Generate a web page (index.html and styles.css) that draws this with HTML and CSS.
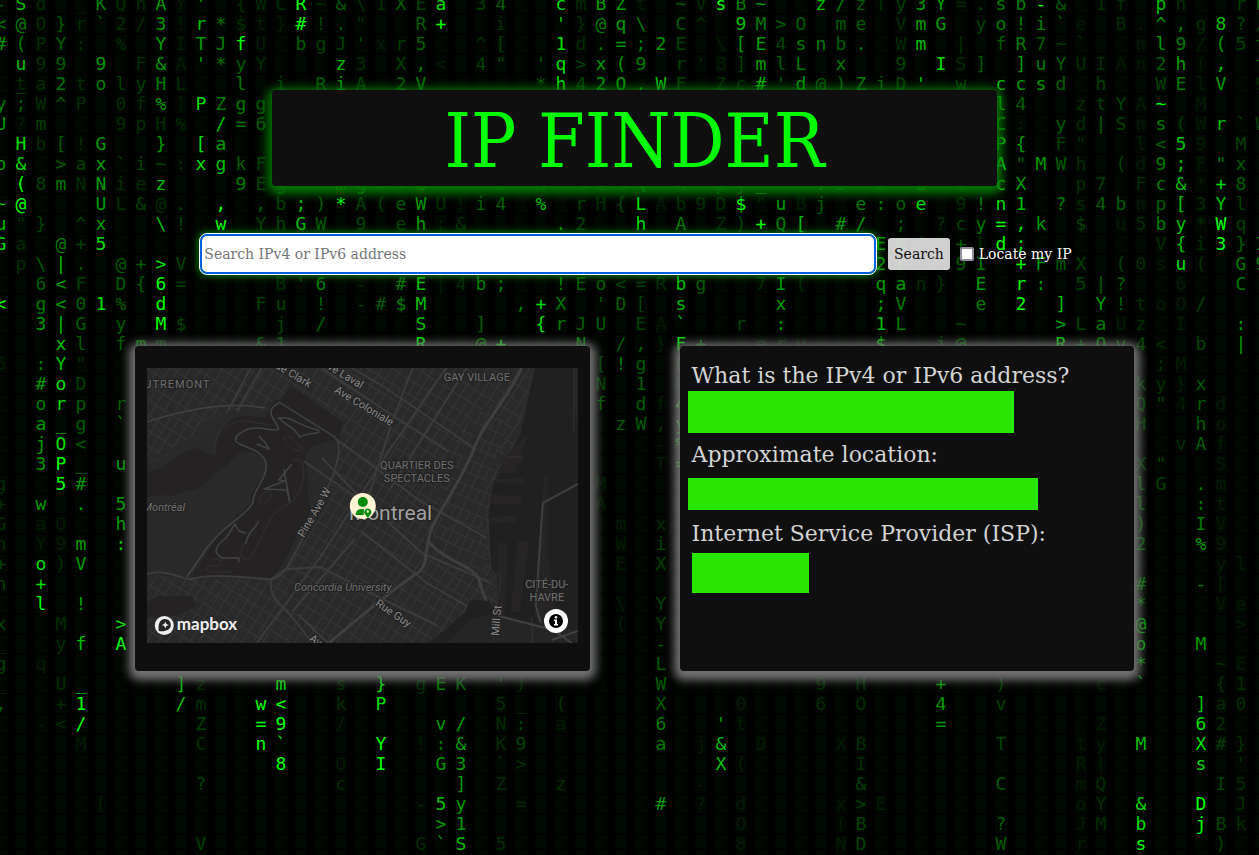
FILE: index.html
```html
<!DOCTYPE html>
<html lang="en">
<head>
<meta charset="utf-8">
<title>IP Finder</title>
<meta name="viewport" content="width=device-width, initial-scale=1">
<link rel="stylesheet" href="styles.css">
</head>
<body>
<div class="rain" id="rain" aria-hidden="true"></div>
<div class="page">
  <header class="banner"><h1>IP FINDER</h1></header>

  <form class="search">
    <input class="search-box" type="text" aria-label="IP address" placeholder="Search IPv4 or IPv6 address">
    <button class="search-button" type="button">Search</button>
    <label class="locate"><input type="checkbox"><span>Locate my IP</span></label>
  </form>

  <main class="cards">
    <section class="card map-card" aria-label="Map">
      <div class="map">
        <svg viewBox="0 0 431 275" preserveAspectRatio="xMidYMid slice" role="img" aria-label="Map of Montreal">
          <defs>
            <pattern id="grid" width="27" height="13" patternUnits="userSpaceOnUse" patternTransform="rotate(32)">
              <path d="M0 .5H27M.5 0V13M10.5 0V13M19.500 0V13" stroke="#343434" fill="none"/>
            </pattern>
            <pattern id="grid2" width="15" height="24" patternUnits="userSpaceOnUse" patternTransform="rotate(24)">
              <path d="M0 .5H15M0 12.500H15M.5 0V24M8.500 0V12" stroke="#343434" fill="none"/>
            </pattern>
          </defs>
          <rect width="431" height="275" fill="#292929"/>
          <rect width="431" height="275" fill="url(#grid)"/>
          <path d="M300 70L345 35L360 60L345 110L340 205L285 180Z" fill="#292929"/>
          <path d="M300 70L345 35L360 60L345 110L340 205L285 180Z" fill="url(#grid2)"/>
          <path d="M0 90C25 80 45 75 62 50L118 38L133 30L196 72L182 120L140 200L125 211L45 211L0 206Z" fill="#292929"/>
          <path d="M68 88C70 62 82 49 96 48L118 49C126 40 120 34 132 32L190 70L172 76C155 80 158 92 162 112C158 132 170 140 155 158C145 176 138 198 124 210L45 209L72 167L104 134C104 115 123 112 119 94C112 80 90 80 82 96C60 106 62 124 38 122C26 134 14 122 0 130V104C18 104 30 84 48 80Z" fill="#242223"/>
          <path d="M144 18L196 54L192 76L132 35Z" fill="#242223"/>
          <path d="M12 228H45L49 238L30 248L0 250V234Z" fill="#242223"/>
          <g fill="none" stroke="#323031">
            <path d="M138 69C145 66 151 80 156 80C152 88 134 75 138 69ZM145 93C163 84 160 125 142 136C122 142 115 170 105 188C90 200 91 174 108 164M122 122C105 130 115 146 124 128ZM68 86C68 65 75 55 98 53L123 57M60 40V52L75 49M35 58L52 43M42 49L62 59M3 95L26 84M4 55L20 71"/>
            <path d="M32 220C50 210 70 220 56 231C48 232 60 240 66 231L72 225M88 208L64 247M75 224L122 244M80 217L105 225M100 233C125 250 115 270 110 270M62 193C68 189 77 191 73 198H61V204H85"/>
          </g>
          <g fill="none" stroke="#434243" stroke-width="1.500">
            <path d="M0 54C40 41 80 33 118 40"/>
            <path d="M132 35C115 44 130 52 132 61C125 66 110 53 92 66C78 80 112 75 119 94C122 111 106 120 106 135C96 151 80 154 60 180L40 209"/>
            <path d="M134 50C145 48 151 58 171 62C176 67 160 64 153 69C147 58 139 58 132 50ZM112 68L118 74L122 81L110 76M145 96L132 112L138 113L117 121L140 122L143 134L137 101M99 165L92 163L88 156L80 169C65 181 68 185 75 190H92V194M112 153C106 165 102 161 99 176"/>
          </g>
          <g fill="none" stroke="#3b3b3b" stroke-width="2">
            <path d="M0 206C20 200 35 212 45 211C65 205 100 210 125 211C134 211 135 202 142 201L174 199L214 220L260 243L290 257"/>
            <path d="M132 34L188 69C198 80 187 105 181 120L152 178L140 200L125 211C120 230 137 238 146 250L166 275"/>
            <path d="M104 0L81 43M115 0L90 43M175 0L251 51L302 84M205 0L239 20L327 80"/>
            <path d="M300 0C280 24 270 45 244 80L175 187L110 275M266 0L245 55L218 140M214 163L280 215L320 238L308 275M240 153L275 185L342 214M320 0L287 52L244 120M188 70L272 132L340 170"/>
            <path d="M175 90L214 130M157 93L216 134M152 247L181 275M146 243L208 171"/>
          </g>
          <g fill="none" stroke="#3f3f3f" stroke-width="3">
            <path d="M375 0C358 35 335 57 327 82C312 116 300 130 286 158C276 179 283 196 272 204C239 226 220 244 182 275"/>
            <path d="M282 174C300 195 326 197 332 211C338 232 341 244 360 250L406 262L425 275L431 265"/>
          </g>
          <path d="M388 0H431V275H415L401 263L354 248L355 212L344 202L342 150L344 120L362 88L374 64Z" fill="#202020"/>
          <g fill="#262425">
            <path d="M359 87L382 65L368 105H350ZM348 111L378 110V116L348 115ZM343 126L375 129V136H343ZM342 149L370 147V154L342 156ZM351 175L361 174L358 250L350 246ZM371 173H382L373 244H364ZM397 107L401 104V188L409 234L404 262L388 249Z"/>
            <path d="M427 0H431V58L427 40ZM361 90L377 88L376 95L364 96Z"/>
          </g>
          <path d="M280 275L320 246L326 231L343 233L350 248L431 262V275Z" fill="#252525"/>
          <path d="M318 244L323 232L342 234L347 246L326 250L300 275H284Z" fill="#202020"/>
          <path d="M387 0L371 58M348 106L340 143L344 201L354 209L351 230L347 275M360 89H377M427 0V65M385 249L386 275" fill="none" stroke="#343132"/>
          <path d="M431 116L396 135L389 238L394 255M352 248L406 262L425 275M405 272L431 263" fill="none" stroke="#3f3f3f" stroke-width="2"/>
          <g class="labels">
            <text class="area" x="-11" y="20" letter-spacing="1">OUTREMONT</text>
            <text class="road" transform="translate(122 -4) rotate(31)">Rue Clark</text>
            <text class="road" transform="translate(174 -3) rotate(31)">Ave Laval</text>
            <text class="road" transform="translate(187 24) rotate(31)">Ave Coloniale</text>
            <text class="area" x="330" y="13" text-anchor="middle">GAY VILLAGE</text>
            <text class="area" x="270" y="101" text-anchor="middle">QUARTIER DES</text>
            <text class="area" x="270" y="114" text-anchor="middle">SPECTACLES</text>
            <text class="place" x="-4" y="143">Montréal</text>
            <text class="road" transform="translate(157 170) rotate(-60)">Pine Ave W</text>
            <text class="city" x="202" y="152">Montreal</text>
            <text class="place" x="196" y="223" text-anchor="middle">Concordia University</text>
            <text class="road" transform="translate(228 237) rotate(34)">Rue Guy</text>
            <text class="road" transform="translate(352 268) rotate(-85)">Mill St</text>
            <text class="road" transform="translate(162 272) rotate(34)">Ave</text>
            <text class="area" x="400" y="220" text-anchor="middle">CITÉ-DU-</text>
            <text class="area" x="400" y="233" text-anchor="middle">HAVRE</text>
          </g>
          <circle cx="216" cy="138" r="13" fill="#fff4d3"/>
          <g fill="#008a0c">
            <circle cx="216" cy="134" r="5"/>
            <path d="M209 147C209 143 211 141 215 141H217V147Z"/>
            <path d="M221 150L218 146A3.500 3.500 0 1 1 224 146Z"/>
          </g>
          <circle cx="221" cy="143.500" r="1.200" fill="#fff4d3"/>
          <circle cx="17.500" cy="257.500" r="9.500" fill="#eee"/>
          <path d="M12 263C11 256 13 251 18 251C22 251 24 254 24 257C24 262 18 264 12 263Z" fill="#252525"/>
          <path d="M18.500 253.500L19.500 256L22 257L19.500 258L18.500 260.500L17.500 258L15 257L17.500 256Z" fill="#eee"/>
          <text class="brand" x="30" y="262">mapbox</text>
        </svg>
        <button class="info" type="button" aria-label="Map information">
          <svg viewBox="0 0 24 24"><circle cx="12" cy="12" r="7" fill="#000"/><path d="M10 10.500H13V15H14V16.500H10V15H11V12H10Z" fill="#fff"/><circle cx="12" cy="8.300" r="1.300" fill="#fff"/></svg>
        </button>
      </div>
    </section>
    <section class="card details">
      <dl>
        <dt>What is the IPv4 or IPv6 address?</dt><dd><span class="bar bar-address"></span></dd>
        <dt>Approximate location:</dt><dd><span class="bar bar-location"></span></dd>
        <dt>Internet Service Provider (ISP):</dt><dd><span class="bar bar-isp"></span></dd>
      </dl>
    </section>
  </main>
</div>
<script type="text/plain" id="drops">
0-4 1S7 2d2 4_2 5K5 6Q2 7h2 8A6 9Y1 10'6 12{2 13W2 14C2 15R9 16~2 17&4 18\2 1912 20X4 21E3 22a8 2433 2544 28c8 29m2 30B6 31Z6 32t1 34~4 35V2 36s9 37B5 38~6 41z7 42/5 43z4 44T2 45y3 4636 47Y6 48=2 49.3 50s5 51b5 52-9 53&4 5512 56f2 58p7 59n2 62r3 63E4
0<5 1@5 2O2 3}4 4r2 5`4 622 7/2 836 9!1 10r7 11*5 12$2 13t1 14}1 15#9 16!3 17.4 18"2 21R4 22+9 25i2 28'7 29}2 30@5 31q6 32\5 34C4 35^2 3797 38M5 39>4 40O4 42m4 43e4 45V2 46m6 47G6 49y3 50o5 51!5 52i5 53`4 54e1 56B2 57.1 58^6 59,5 60g2 6187 62?3 63/3
0#6 1(5 2P2 3Y4 4:2 6%2 8Y6 9I1 10T6 11J5 12f9 13U1 15b4 16g3 17J3 18'3 19x1 20r3 2154 24^2 25[3 2818 29d2 30.5 31=6 32;5 3326 34E3 36\1 37[6 38E6 3943 40s5 41n5 42b4 43.5 45W2 46m7 48|2 50f4 51R5 5274 53~3 54`2 57n1 58l6 5995 60/1 61(6 6253 63t4
1u7 292 394 596 7F2 8&6 9A1 10'6 11*5 12y4 13Y2 17z7 1832 20X3 21,5 22<1 2443 25"3 27'4 28q8 29>3 30x6 31(6 3295 34r3 35'2 36B1 37]3 38m6 39l4 40L5 42x5 4593 47I8 48S2 49]4 51]6 52u5 53Y4 54U2 55I2 56A1 57n1 5824 59h6 60(1 61,7 63f5
1_4 1t2 2a2 325 4t2 5o5 6l3 7y3 8H5 9L2 12l5 14i3 16R4 17i6 18A3 2024 21V5 27*4 28h8 2943 3026 31O6 32.6 33W7 34F3 36Z2 37c2 38#7 39'4 40d6 41@4 42)4 43Z5 44j4 45D3 46'7 48w3 50c7 51c6 52s6 53d4 55h3 58W3 59E5 60l1 61V6 6392
0y5 1;4 2W2 3^4 4P2 602 7f2 8%6 9]1 10P8 11Z5 12g5 13g4 50l7 5144 54z2 55t3 56Y3 57A1 58~9 60M1
0U6 1?1 2m3 692 7p2 8H2 9%2 11/7 12=5 1364 50C6 51:1 53y4 54d2 55|4 56S3 57n1 58s5 59(3 60W1 61r7 62`3 63W3
1H8 2b2 3[4 4!2 5G6 8}6 10[8 11a6 50P7 51{6 53F3 54"2 57l1 58<4 5957 6091 62M3
0o6 1&8 3>4 4a3 5x6 6`3 7i3 8~3 9:2 10x8 11g7 12k4 13F3 50A8 51"4 52M6 53W4 54h2 56(3 57d1 5895 59;7 60F1 61"5 62x4
1(9 283 3m5 4N2 5N6 6i2 7e2 8z7 1295 13E3 14g4 16P3 17m8 18g5 19x4 20f4 21G7 2595 27H5 29%4 30E4 31%4 32\7 34K5 36p4 37j4 38_8 41.8 42D5 44D4 46u8 4894 50c8 51X6 54p2 5573 57F2 58c5 59&7 60*1 61+8 6284
0~7 1@9 5U6 6L2 7&3 8@2 9.3 11,9 13,4 14b3 15;7 16)4 17*9 18A3 19(3 20e4 21W6 22U2 23!1 24i4 2544 27%7 29r3 30H2 31{3 32L8 33A1 34b2 3592 36D2 37$9 38"1 39u6 40B1 41j4 43e5 44:5 45o4 46e8 4892 49!5 50n8 5117 53?5 54s2 5544 56b4 57n1 58p4 59[7 6032 61Y7 62l3
0u7 1"2 2}3 4^3 5x6 8\7 9!3 11w9 13Y3 14h3 15G7 16W4 1893 20e3 21h6 22;1 23&2 28.6 2923 32h8 34A5 36Z2 37)3 38+9 39Q5 40[7 42#6 43/6 45;4 47?2 48c3 49y5 50=9 51,8 52k6 54$3 56u1 5752 58b5 59y7 60*2 61W9 62q3
0G8 1a2 3@5 4+3 558 44E6 45@6 4662 48+4 49l2 50d9 51;8 58V2 59{7 60i2 6139 62}4 63I5
1p2 2\4 3|7 4.4 6@4 7+4 8>8 9V3 4426 45r6 4894 49I5 51+9 52F6 53m4 54X3 56(3 5702 58s1 59u8 60(2 62G5 6395
264 3<6 4F3 6D4 7{4 869 9=3 14B2 15'3 1665 18-2 20#5 21E7 22|1 2342 24b5 25;5 28!5 29E4 30o4 31<3 32=3 33R2 34b7 35g4 3872 39I6 40(2 44q6 45a6 46n2 47}2 49E6 51r9 52:6 5453 55|4 56?4 5961 62C5
0<9 2g5 3<6 404 518 6%4 8d9 13F3 14u3 16!4 18-3 19#4 20$5 21M7 26,5 27+8 28X5 30'4 31D4 32[3 34s7 39x6 44;6 45V5 49e5 5129 53]7 55Y6 56!4 57t2 58o1 59O1 60/3
236 3|7 4G4 6y4 8M9 9$3 14j3 16/4 21S7 24]4 27{8 28r5 29J4 30U4 32E3 33A1 34`7 37r3 39:6 4417 45L5 48~3 53>6 54L3 55a5 56U1 57z2 59I1 62:6
3x7 4l4 6f4 7m5 8m3 13&4 1414 21R8 24@5 25+8 29N5 31/4 32,4 33}1 34F8 35+5 38e2 39r2 40y2 44$7 47j3 48@4 53R7 54+4 55O5 56v4 5743 58<2 60b3 62|6
051 2:5 3Y7 4"2 30[3 31!5 32g4 34E3 58;2 59M1
2#6 3o8 4D3 30N3 3214 34C3 57k3 58y2 59}1 60x4
2o5 3r8 4p4 6r4 30f4 32d4 33f1 3449 57Q3 58"3 5941 60r4 61d1
2a6 3_8 4g4 6`5 31z4 32W4 33,2 34y9 57H3 60h4 61o1
2j6 3O8 4<4 33-1 34%8 59v2 60A4 61f1
236 3P9 4_6 6u6 33T1 34=9 57X3 58"3 61S1
0g2 359 4#6 30M1 57l4 58G3 60.5 61m1
0+2 2w6 4.6 656 30A1 57l4 60:5 61t1
0G2 2a1 3O1 6h6 31m1 33x2 57)4 60I5 61V1
0n2 2Y1 391 4m6 6:7 31W1 33i3 5724 60%6 6191
0+3 2o8 3)2 4V6 31E1 33X3 61y1 62l1
0n3 2+8 57#5 60-5 61[1
2l9 4!6 31\1 33Y3 57*5 61V1 62e1
0x3 3M2 6>8 31(1 33Y3 57@6 62>1
0_3 3y2 4f7 6A9 33-4 57o6 60M6
0g3 2q1 29C7 33L4 57*6 61~2 62E1
0_3 3U2 4_9 9]7 10z2 14m8 17s2 19}8 21g2 22E5 23K4 25'3 26)2 33W4 4192 43H2 47+6 50)3 55c1 57`6 61{2 6212
0,4 3+2 419 9/7 10m2 13w9 14<9 17k2 19P8 2552 26_3 28(2 33X4 3701 4162 43O2 4746 50v3 60]7 61a2 6202
2-1 3<2 4/9 10Z3 13=9 1499 17/1 22v6 23/6 25N2 26:3 28a1 3365 36'6 37t1 47=6 54_1 55Z1 6068 6122
4M1 10C2 13n9 14`8 19Y9 21!1 22:5 23&6 25K2 2693 33a5 35j1 36&7 38D1 42X1 43B2 50T3 54t1 55y1 57M7 60X8 61#3 62}2
1489 17O1 19I9 22G6 2336 25`2 26>2 36X7 37(1 43I2 54R1 55|1 60s8 62'2
10?3 17c2 23]6 25Z2 28z2 35-1 43&3 50C4 54m1 55Q2 61I3 6252
5[1 21-2 2257 23y6 26=2 33#6 35?1 37d1 42x1 43>3 44E1 54o1 55Y2 57&8 60D9 62J2
22>6 2316 37O1 42(1 43B3 50?4 54J1 55M2 57b8 60j9 61B3 62k2
10V3 21G2 22`6 23S7 2552 3781 42N1 43D3 50W4 54r1 57s9 61)3
</script>
<script src="rain.js"></script>
</body>
</html>
```
FILE: styles.css
```css
* { box-sizing: border-box; }

body {
  margin: 0;
  min-height: 100vh;
  background: #000;
  color: #fff;
  font-family: "Roboto Slab", "DejaVu Serif", serif;
}

/* falling characters behind the page */
.rain {
  position: absolute;
  inset: 0;
  overflow: hidden;
  z-index: -1;
  display: grid;
  grid-template-columns: repeat(64, 20px);
  grid-auto-rows: 20px;
  align-content: start;
  font: 18px/20px "DejaVu Sans Mono", monospace;
  text-align: center;
  background:
    repeating-linear-gradient(#000 0 2px, transparent 2px 20px) 0 -7px,
    repeating-linear-gradient(90deg, #000600 0 7px, #000 7px 15px, #000600 15px 20px);
}
.drop { margin: -6px 9px 6px -9px; white-space: pre; }
.l1 { color: #001c00; }
.l2 { color: #002c00; }
.l3 { color: #004000; }
.l4 { color: #005a00; }
.l5 { color: #007800; }
.l6 { color: #009800; }
.l7 { color: #00bc00; }
.l8 { color: #00dc00; }
.l9 { color: #00ff00; }

.page {
  display: flex;
  flex-direction: column;
  align-items: center;
  padding: 90px 0 40px 10px;
}

.banner {
  width: 58%;
  padding-top: 6px;
  background: #0f0f0f;
  border-radius: 4px;
  box-shadow: 0 3px 10px 5px #007400;
}
h1 {
  margin: 0;
  color: #0f0;
  font-family: "Roboto Slab", "DejaVu Serif Condensed", "Liberation Serif", serif;
  font-size: 75px;
  font-weight: 400;
  line-height: 90px;
  text-align: center;
  white-space: nowrap;
}

.search {
  display: flex;
  align-items: center;
  width: 70%;
  margin-top: 48px;
  padding-left: 3px;
  font-size: 14px;
}
.search-box {
  flex: 1;
  min-width: 0;
  height: 40px;
  padding: 2px;
  border: 2px solid #0060df;
  border-radius: 7px;
  outline: 1px solid #fff;
  background: #fff;
  color: #000;
  font: inherit;
  box-shadow: 0 0 8px 1px #00a000;
}
.search-box::placeholder { color: #757575; opacity: 1; }
.search-button {
  height: 32px;
  margin-left: 12px;
  padding: 0 6px;
  border: 0;
  border-radius: 3px;
  background: rgba(220, 220, 220, .94);
  color: #111;
  font: inherit;
}
.locate {
  display: flex;
  align-items: center;
  gap: 5px;
  margin-left: 10px;
  white-space: nowrap;
}
.locate input {
  appearance: none;
  width: 14px;
  height: 14px;
  margin: 0;
  border: 2px solid #8f8f9d;
  border-radius: 2px;
  background: #fff;
}
.locate input:checked { background: #0060df; }

.cards {
  display: grid;
  grid-template-columns: 1fr 1fr;
  gap: 90px;
  width: 80%;
  margin-top: 72px;
}
.card {
  min-height: 325px;
  border-radius: 4px;
  background: #0f0f0f;
  box-shadow: 0 3px 10px 6px #747474;
}
.map-card { padding: 22px 12px 28px; }
.map { position: relative; height: 275px; }
.map svg { display: block; width: 100%; height: 100%; }

.labels text {
  font-family: Roboto, sans-serif;
  paint-order: stroke;
  stroke: #222;
  stroke-width: 2px;
}
.labels .area { font-size: 11px; fill: #6f6f6f; }
.labels .road { font-size: 11px; fill: #888; }
.labels .place { font-size: 11px; font-style: italic; fill: #6f6f6f; }
.labels .city { font-size: 21px; fill: #a0a0a0; }
.brand { font: 700 17px Lato, sans-serif; fill: #eee; }

.info {
  position: absolute;
  right: 10px;
  bottom: 10px;
  width: 24px;
  height: 24px;
  padding: 0;
  border: 0;
  border-radius: 50%;
  background: #fff;
}

.details { padding: 14px 12px; }
dl { margin: 0; color: #d3d3d3; }
dt { font-size: 22px; line-height: 31px; white-space: nowrap; }
dd { display: flex; align-items: center; height: 48px; margin: 0; }
.bar { display: block; height: 40px; background: #28e600; }
.bar-address { align-self: flex-start; width: 326px; height: 42px; margin-left: -4px; }
.bar-location { width: 350px; height: 32px; margin-left: -4px; }
.bar-isp { width: 117px; }

@media (max-width: 900px) {
  .cards { grid-template-columns: 1fr; gap: 40px; }
  .banner, .search { width: 90%; }
}
```
FILE: rain.js
```js
// Each token is column, glyph, brightness (1-9); each line is one row.
const rain = document.getElementById("rain");
const rows = document.getElementById("drops").textContent.trim().split("\n");
rows.forEach((row, y) => {
  row.trim().split(" ").forEach((token) => {
    const drop = document.createElement("span");
    drop.className = "drop l" + token.slice(-1);
    drop.textContent = token.slice(-2, -1);
    drop.style.gridArea = (y + 1) + " / " + (Number(token.slice(0, -2)) + 1);
    rain.append(drop);
  });
});
```
